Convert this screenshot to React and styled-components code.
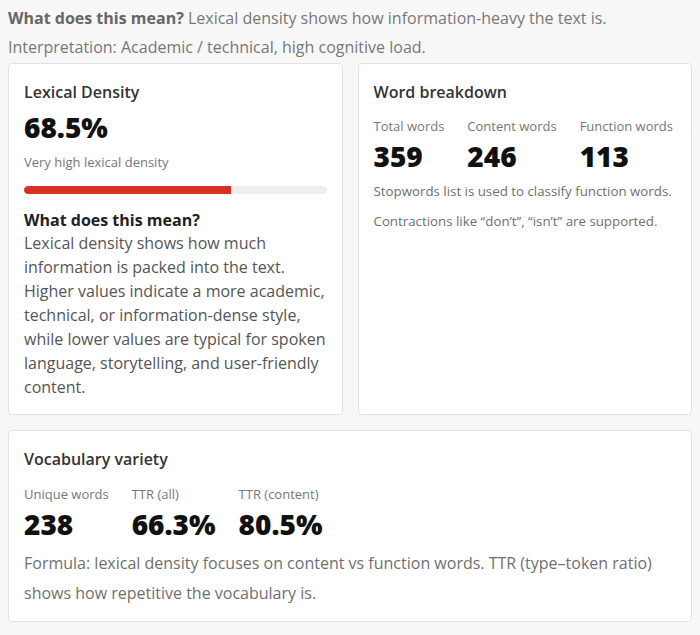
import React from "react";
import styled, { createGlobalStyle } from "styled-components";

const Global = createGlobalStyle`
  html, body { margin: 0; padding: 0; background: #f7f7f8; }
  body { font-family: "Open Sans", "Noto Sans", sans-serif; color: #333; }
  * { box-sizing: border-box; }
`;

const Page = styled.div`
  padding: 4px 8px 14px 8px;
  display: flex;
  flex-direction: column;
`;

const Note = styled.p`
  margin: 0;
  font-size: 16px;
  line-height: 29px;
  color: #777;
  b { color: #666; font-weight: 700; }
`;

const Grid = styled.div`
  display: grid;
  grid-template-columns: 1fr 1fr;
  gap: 15px;
  margin-top: 1px;
`;

const Card = styled.section`
  background: #fff;
  border: 1px solid #e2e2e4;
  border-radius: 4px;
  padding: 18px 15px ${(p) => p.$pb || 15}px 15px;
  margin-top: ${(p) => p.$mt || 0}px;
`;

const Title = styled.h3`
  margin: 0;
  font-size: 16px;
  line-height: 20px;
  font-weight: 600;
  color: #333;
`;

const Big = styled.div`
  font-size: 28px;
  line-height: 34px;
  font-weight: 800;
  color: #111;
  white-space: nowrap;
  margin-top: ${(p) => p.$mt || 0}px;
`;

const Small = styled.div`
  font-size: 13px;
  line-height: 18px;
  color: #777;
  white-space: nowrap;
  margin-top: ${(p) => p.$mt || 0}px;
`;

const Track = styled.div`
  height: 8px;
  border-radius: 4px;
  background: #eeeef0;
  overflow: hidden;
  margin: 15px 0 15px;
`;

const Fill = styled.div`
  height: 100%;
  background: #d93025;
  border-radius: 4px 0 0 4px;
`;

const Subhead = styled.div`
  font-size: 16px;
  line-height: 22px;
  font-weight: 700;
  color: #222;
`;

const Para = styled.p`
  margin: 0;
  font-size: 16px;
  line-height: 24px;
  color: #555;
`;

const Stats = styled.div`
  display: flex;
  gap: 23px;
  margin-top: ${(p) => p.$mt}px;
`;

const Stat = styled.div`
  display: flex;
  flex-direction: column;
  flex-shrink: 0;
  gap: 4px;
`;

const Foot = styled.p`
  margin: ${(p) => p.$mt}px 0 0;
  font-size: ${(p) => p.$size}px;
  line-height: ${(p) => p.$lh}px;
  color: #6f6f6f;
`;

export default function App() {
  return (
    <>
      <Global />
      <Page>
        <Note>
          <b>What does this mean?</b> Lexical density shows how information-heavy the text is.
        </Note>
        <Note>Interpretation: Academic / technical, high cognitive load.</Note>
        <Grid>
          <Card>
            <Title>Lexical Density</Title>
            <Big $mt={8}>68.5%</Big>
            <Small $mt={9}>Very high lexical density</Small>
            <Track>
              <Fill style={{ width: "68.5%" }} />
            </Track>
            <Subhead>What does this mean?</Subhead>
            <Para>
              Lexical density shows how much information is packed into the text. Higher values
              indicate a more academic, technical, or information-dense style, while lower values
              are typical for spoken language, storytelling, and user-friendly content.
            </Para>
          </Card>
          <Card>
            <Title>Word breakdown</Title>
            <Stats $mt={15}>
              <Stat>
                <Small>Total words</Small>
                <Big>359</Big>
              </Stat>
              <Stat>
                <Small>Content words</Small>
                <Big>246</Big>
              </Stat>
              <Stat>
                <Small>Function words</Small>
                <Big>113</Big>
              </Stat>
            </Stats>
            <Foot $mt={8} $size={13.3} $lh={20}>
              Stopwords list is used to classify function words.
            </Foot>
            <Foot $mt={10} $size={13.3} $lh={20}>
              Contractions like “don’t”, “isn’t” are supported.
            </Foot>
          </Card>
        </Grid>
        <Card $mt={15} $pb={13}>
          <Title>Vocabulary variety</Title>
          <Stats $mt={16}>
            <Stat>
              <Small>Unique words</Small>
              <Big>238</Big>
            </Stat>
            <Stat>
              <Small>TTR (all)</Small>
              <Big>66.3%</Big>
            </Stat>
            <Stat>
              <Small>TTR (content)</Small>
              <Big>80.5%</Big>
            </Stat>
          </Stats>
          <Foot $mt={7} $size={16} $lh={30}>
            Formula: lexical density focuses on content vs function words. TTR (type–token ratio)
            shows how repetitive the vocabulary is.
          </Foot>
        </Card>
      </Page>
    </>
  );
}
